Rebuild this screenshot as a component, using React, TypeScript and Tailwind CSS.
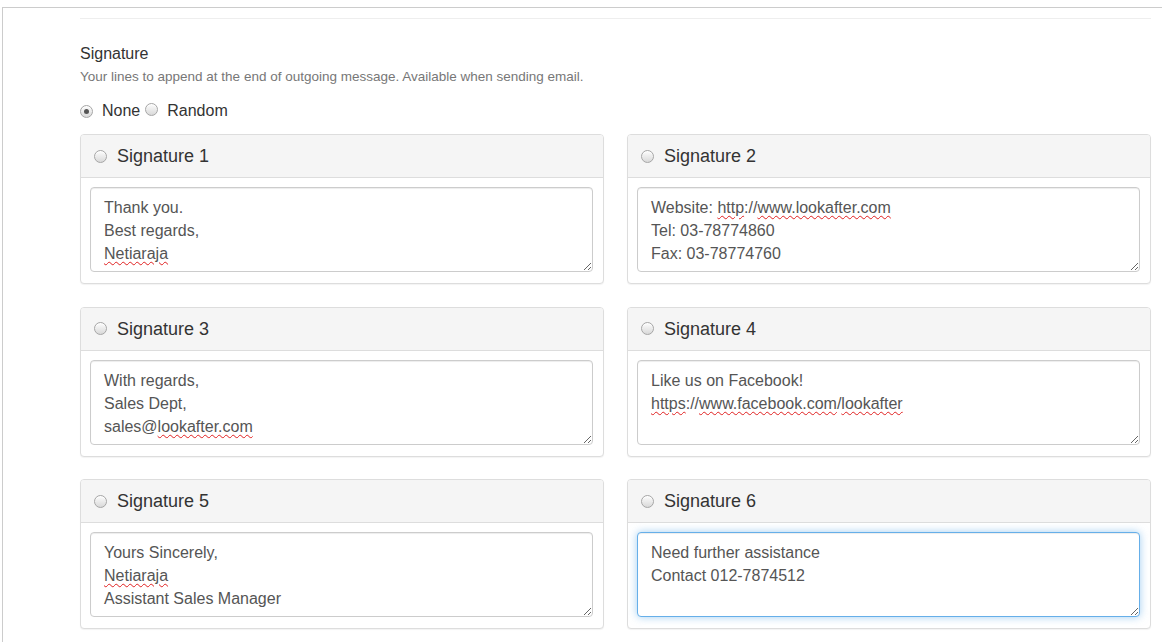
import React from "react";

const font = { fontFamily: '"Liberation Sans", Arial, Helvetica, sans-serif' };

function Radio({ checked = false }: { checked?: boolean }) {
  return (
    <span className="relative inline-flex h-[13px] w-[13px] shrink-0 items-center justify-center rounded-full border border-[#a6a6a6] bg-gradient-to-b from-[#fdfdfd] to-[#d9d9d9] shadow-[inset_0_1px_0_rgba(255,255,255,0.8)]">
      {checked && <span className="h-[5px] w-[5px] rounded-full bg-[#555]" />}
    </span>
  );
}

function Sp({ children }: { children: React.ReactNode }) {
  return (
    <span className="underline decoration-wavy decoration-[#e02020] decoration-[1px] underline-offset-[2px]">
      {children}
    </span>
  );
}

type Sig = { title: string; lines: React.ReactNode[]; focused?: boolean };

const sigs: Sig[] = [
  { title: "Signature 1", lines: ["Thank you.", "Best regards,", <Sp key="n">Netiaraja</Sp>] },
  {
    title: "Signature 2",
    lines: [
      <>Website: <Sp>http</Sp>://<Sp>www.lookafter.com</Sp></>,
      "Tel: 03-78774860",
      "Fax: 03-78774760",
    ],
  },
  { title: "Signature 3", lines: ["With regards,", "Sales Dept,", <>sales@<Sp>lookafter.com</Sp></>] },
  {
    title: "Signature 4",
    lines: [
      "Like us on Facebook!",
      <><Sp>https</Sp>://<Sp>www.facebook.com</Sp>/<Sp>lookafter</Sp></>,
    ],
  },
  { title: "Signature 5", lines: ["Yours Sincerely,", <Sp key="n">Netiaraja</Sp>, "Assistant Sales Manager"] },
  { title: "Signature 6", lines: ["Need further assistance", "Contact 012-7874512"], focused: true },
];

function Panel({ sig }: { sig: Sig }) {
  return (
    <div className="h-[150px] rounded-[4px] border border-[#dddddd] bg-white shadow-[0_1px_1px_rgba(0,0,0,0.05)]">
      <div className="flex h-[43px] items-center gap-[10px] rounded-t-[3px] border-b border-[#dddddd] bg-[#f5f5f5] pl-[13px]">
        <Radio />
        <span className="text-[18px] leading-[20px] text-[#333]">{sig.title}</span>
      </div>
      <div className="pb-[10px] pl-[9px] pr-[10px] pt-[9px]">
        <div
          className={
            "h-[85px] resize-y overflow-auto rounded-[4px] border bg-white pb-[4px] pl-[13px] pr-[12px] pt-[8px] text-[16px] leading-[23px] text-[#555] " +
            (sig.focused
              ? "border-[#66afe9] shadow-[inset_0_1px_1px_rgba(0,0,0,0.075),0_0_8px_rgba(102,175,233,0.6)]"
              : "border-[#cccccc] shadow-[inset_0_1px_1px_rgba(0,0,0,0.075)]")
          }
        >
          {sig.lines.map((l, i) => (
            <div key={i} className="whitespace-pre">{l}</div>
          ))}
        </div>
      </div>
    </div>
  );
}

export default function App() {
  return (
    <div className="h-[642px] w-[1162px] overflow-hidden bg-white" style={font}>
      <div className="ml-[2px] mt-[7px] h-[700px] w-[1200px] border-l border-t border-[#cccccc]">
        <div className="w-[1148px] pl-[77px]">
          <div className="mt-[10px] w-[1071px] border-t border-[#eeeeee]" />
          <div className="mt-[24px] text-[16px] leading-[22px] text-[#333]">Signature</div>
          <div className="mt-[3px] text-[13.5px] leading-[18px] text-[#777]">
            Your lines to append at the end of outgoing message. Available when sending email.
          </div>
          <div className="mt-[14px] flex h-[22px] items-center text-[16px] text-[#333]">
            <Radio checked />
            <span className="ml-[9px]">None</span>
            <span className="ml-[5px]"><Radio /></span>
            <span className="ml-[9px]">Random</span>
          </div>
          <div className="mt-[12px] grid w-[1071px] grid-cols-2 gap-x-[23px] gap-y-[22.5px]">
            {sigs.map((s) => (
              <Panel key={s.title} sig={s} />
            ))}
          </div>
        </div>
      </div>
    </div>
  );
}
